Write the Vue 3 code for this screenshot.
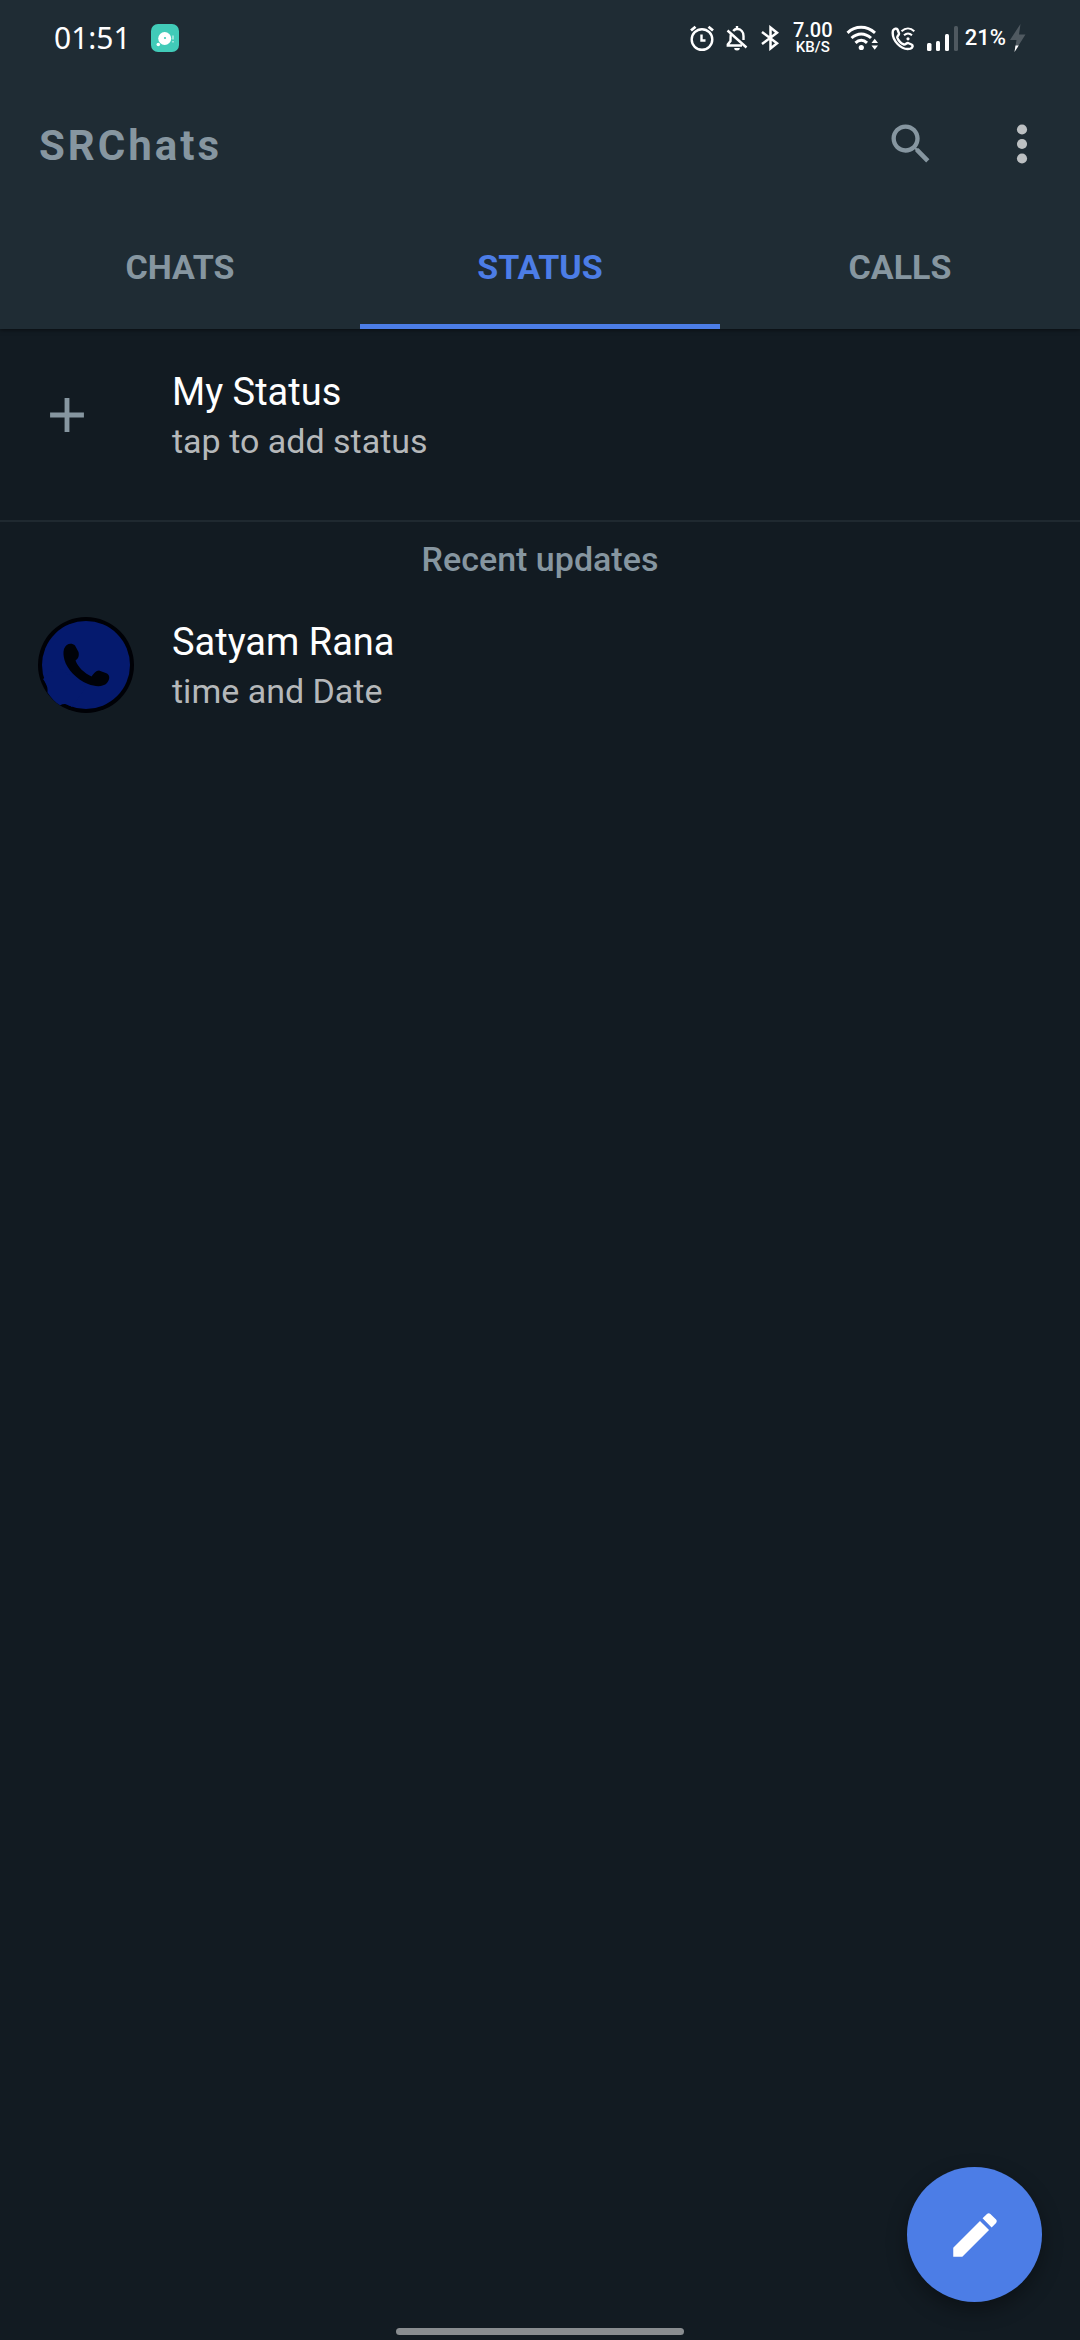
<script setup>
import { ref } from 'vue'

const tabs = ['CHATS', 'STATUS', 'CALLS']
const active = ref('STATUS')
</script>

<template>
  <div class="screen">
    <header class="header">
      <div class="statusbar">
        <div class="left">
          <span class="time">01:51</span>
          <svg width="28" height="28" viewBox="0 0 28 28">
            <rect width="28" height="28" rx="7" fill="#41cbb8" />
            <circle cx="13.7" cy="14.5" r="6.5" fill="#fff" />
            <circle cx="7.3" cy="20.5" r="1.8" fill="#fff" />
            <circle cx="14" cy="14" r="1.1" fill="#41cbb8" />
            <path d="M22 11.5v4M22 17v1.500" stroke="#c9f2ec" stroke-width="1.300" />
          </svg>
        </div>
        <div class="right">
          <svg width="24" height="26" viewBox="0 0 24 26" fill="none" stroke="#fff" stroke-width="2.4">
            <circle cx="12" cy="14.500" r="10.300" />
            <path d="M1 5.500 5.500 1.700M23 5.500 18.500 1.700" stroke-width="2.800" />
            <path d="M11.500 9.500v6h4" />
          </svg>
          <svg width="22" height="26" viewBox="0 0 22 26" fill="none" stroke="#fff" stroke-width="2.400">
            <path d="M7.200 6C8.300 4.600 9.500 4 11 4c4 0 6.500 3 6.500 7v4M4.800 9.500C4.500 12 4.500 13 4.500 16L1.800 19.500V20.500H16" />
            <path d="M11 1v3M1.500 5.500 20.500 22.500" />
            <path d="M8.200 23h5.600a2.800 2.500 0 0 1-5.600 0z" fill="#fff" stroke="none" />
          </svg>
          <svg width="20" height="26" viewBox="0 0 20 26" fill="none" stroke="#fff" stroke-width="2.500">
            <path d="M2 7 17 18.300 10.500 23.500V2.500L17 7.700 2 19" />
          </svg>
          <div class="speed">
            <span class="rate">7.00</span>
            <span class="unit">KB/S</span>
          </div>
          <svg width="33" height="26" viewBox="0 0 33 26" fill="none" stroke="#fff" stroke-width="3">
            <path d="M1.500 7.800C9.500 0.500 20.500 0.500 29 7.800M5.500 13C11.500 7.500 19 7.500 25 13M9.500 17.800C13 14.500 17.500 14.500 21 17.800" />
            <circle cx="15.300" cy="22.500" r="2.600" fill="#fff" stroke="none" />
            <path d="m25.500 18 3.200-4.300L32 18zM25.500 20.500l3.200 4.300 3.300-4.300z" fill="#fff" stroke="none" />
          </svg>
          <svg width="24" height="26" viewBox="0 0 24 26" fill="none" stroke="#fff" stroke-width="2.400" stroke-linejoin="round">
            <path d="M2 5.500C3.500 3.500 5.500 3 6.500 4.500L8 8.500C8.300 10 5.800 11.200 6.300 12.700 7.500 16 10.500 18.700 13 19.500 14.500 20 15.500 17.800 17 18L20.500 19.500C22.500 20.500 21.500 23 19.500 23.700 10.500 26 0 15 2 5.500z" />
            <path d="M10.500 6.200C14.500 2.700 19.500 2.700 23.300 6.200M13 10.300C15.500 8 18.500 8 21 10.300" stroke-width="2" />
            <circle cx="17" cy="13.800" r="1.600" fill="#fff" stroke="none" />
          </svg>
          <div class="battery">
            <svg width="34" height="26" viewBox="0 0 34 26" fill="#fff">
              <rect x="0" y="18" width="4.500" height="8" rx="1.500" />
              <rect x="9" y="16" width="4" height="10" rx="1.500" />
              <rect x="18" y="9" width="4" height="17" rx="1.500" />
              <rect x="27" y="1" width="4" height="25" rx="1.500" fill="#4f5960" />
            </svg>
            <span class="percent">21%</span>
            <svg width="16" height="28" viewBox="0 0 16 28">
              <path d="M10.500 0 0 16h6.500L4.500 28 15.500 10.500H9z" fill="#4f5960" />
              <path d="M5.500 21.500h3.200L4.500 28z" fill="#fff" />
            </svg>
          </div>
        </div>
      </div>

      <div class="appbar">
        <h1>SRChats</h1>
        <div class="actions">
          <button type="button" aria-label="Search">
            <svg width="52" height="52" viewBox="0 0 24 24" fill="#8696a0">
              <path d="M15.500 14h-.79l-.28-.27C15.410 12.590 16 11.110 16 9.500 16 5.910 13.090 3 9.500 3S3 5.910 3 9.500 5.910 16 9.500 16c1.610 0 3.090-.59 4.230-1.570l.27.28v.79l5 4.990L20.490 19l-4.990-5zm-6 0C7.010 14 5 11.990 5 9.500S7.010 5 9.500 5 14 7.010 14 9.500 11.990 14 9.500 14z" />
            </svg>
          </button>
          <button type="button" aria-label="More options">
            <svg width="58" height="58" viewBox="0 0 24 24" fill="#bcc0c2">
              <circle cx="12" cy="6" r="2.100" /><circle cx="12" cy="12" r="2.100" /><circle cx="12" cy="18" r="2.100" />
            </svg>
          </button>
        </div>
      </div>

      <nav class="tabs" role="tablist">
        <button
          v-for="tab in tabs"
          :key="tab"
          type="button"
          role="tab"
          :aria-selected="tab === active"
          :class="{ selected: tab === active }"
          @click="active = tab"
        >{{ tab }}</button>
      </nav>
    </header>

    <main>
      <section class="tile mine">
        <div class="leading">
          <svg width="58" height="58" viewBox="0 0 24 24" fill="#8696a0"><path d="M19 13h-6v6h-2v-6H5v-2h6V5h2v6h6v2z" /></svg>
        </div>
        <div>
          <p class="name">My Status</p>
          <p class="detail">tap to add status</p>
        </div>
      </section>

      <h2>Recent updates</h2>

      <section class="tile">
        <div class="leading">
          <svg width="96" height="96" viewBox="0 0 96 96">
            <circle cx="48" cy="48" r="48" fill="#000106" />
            <circle cx="48" cy="48" r="44" fill="#051a6e" />
            <path d="M5 62C9 68 10 71 9.500 75.500 13 81 17 85 22 88.300 26 86.500 29 86.500 34 90L48 70 20 50z" fill="#051a6e" />
            <path d="M26 32C28 26 34 25.500 37 28.500L40.500 35C41.500 39 40 42 37.500 43.500 40 50 46 56 53.500 59.500 55.500 57 58 53.500 61 53.500L69 56.500C72.500 59 71.500 63 69 66 65 70 58 70 50 67 38 62 29 52 26.500 43 25.500 39 25 36 26 32z" fill="#000208" />
          </svg>
        </div>
        <div>
          <p class="name">Satyam Rana</p>
          <p class="detail">time and Date</p>
        </div>
      </section>
    </main>

    <button class="fab" type="button" aria-label="Edit status">
      <svg width="58" height="58" viewBox="0 0 24 24" fill="#fff">
        <path d="M3 17.250V21h3.750L17.810 9.940l-3.750-3.750L3 17.250zM20.710 7.040c.39-.39.39-1.020 0-1.410l-2.340-2.340c-.39-.39-1.020-.39-1.410 0l-1.830 1.830 3.750 3.750 1.830-1.830z" />
      </svg>
    </button>
    <div class="homebar"></div>
  </div>
</template>

<style>
body {
  margin: 0;
  background: #121b22;
}
</style>

<style scoped>
.screen {
  min-height: 100vh;
  background: #121b22;
  font-family: Roboto, "Liberation Sans", sans-serif;
  color: #8696a0;
}
h1, h2, p {
  margin: 0;
}
button {
  padding: 0;
  border: 0;
  background: none;
  font-family: inherit;
  color: inherit;
  cursor: pointer;
}
svg {
  display: block;
  flex: none;
}
.header {
  background: #1f2c34;
  box-shadow: 0 1px 4px rgba(0, 0, 0, 0.5);
}
.statusbar {
  display: flex;
  justify-content: space-between;
  align-items: center;
  height: 76px;
  padding: 0 54px;
  color: #fff;
}
.left, .right, .battery {
  display: flex;
  align-items: center;
}
.left {
  gap: 20px;
}
.time {
  font-family: "Noto Sans", sans-serif;
  font-size: 30px;
  line-height: 40px;
}
.right {
  gap: 12px;
}
.battery {
  gap: 4px;
}
.speed {
  display: flex;
  flex-direction: column;
  align-items: center;
  width: 42px;
  font-weight: 500;
}
.rate {
  font-size: 20px;
  line-height: 17px;
}
.unit {
  font-size: 15px;
  line-height: 16px;
}
.percent {
  font-size: 22px;
  line-height: 28px;
  font-weight: 500;
}
.appbar {
  display: flex;
  justify-content: space-between;
  align-items: center;
  height: 136px;
  padding: 0 29px 0 38px;
}
h1 {
  padding: 4px 0 0 1px;
  font-size: 42px;
  line-height: 48px;
  font-weight: 700;
  letter-spacing: 3px;
}
.actions {
  display: flex;
  align-items: center;
  gap: 56px;
}
.tabs {
  display: flex;
}
.tabs button {
  flex: 1;
  padding-bottom: 2px;
  border-bottom: 5px solid transparent;
  font-size: 34px;
  line-height: 110px;
  font-weight: 700;
}
.tabs .selected {
  color: #4c7de6;
  border-color: #4c7de6;
}
.tile {
  display: flex;
  gap: 38px;
  padding: 21px 38px;
}
.mine {
  padding: 38px 38px 55px;
  border-bottom: 2px solid #1f2930;
}
.leading {
  display: flex;
  align-items: center;
  width: 96px;
  height: 96px;
}
.name {
  font-size: 38px;
  line-height: 50px;
  color: #fff;
}
.detail {
  font-size: 34px;
  line-height: 48px;
  color: #b5b8ba;
}
h2 {
  padding: 13px 0;
  font-size: 34px;
  line-height: 48px;
  font-weight: 500;
  text-align: center;
}
.fab {
  position: fixed;
  right: 38px;
  bottom: 38px;
  display: flex;
  align-items: center;
  justify-content: center;
  width: 135px;
  height: 135px;
  border-radius: 50%;
  background: #4c7de6;
  box-shadow: 0 8px 20px rgba(0, 0, 0, 0.35);
}
.homebar {
  position: fixed;
  left: 50%;
  bottom: 5px;
  width: 288px;
  height: 7px;
  margin-left: -144px;
  border-radius: 4px;
  background: #898d90;
}
</style>
